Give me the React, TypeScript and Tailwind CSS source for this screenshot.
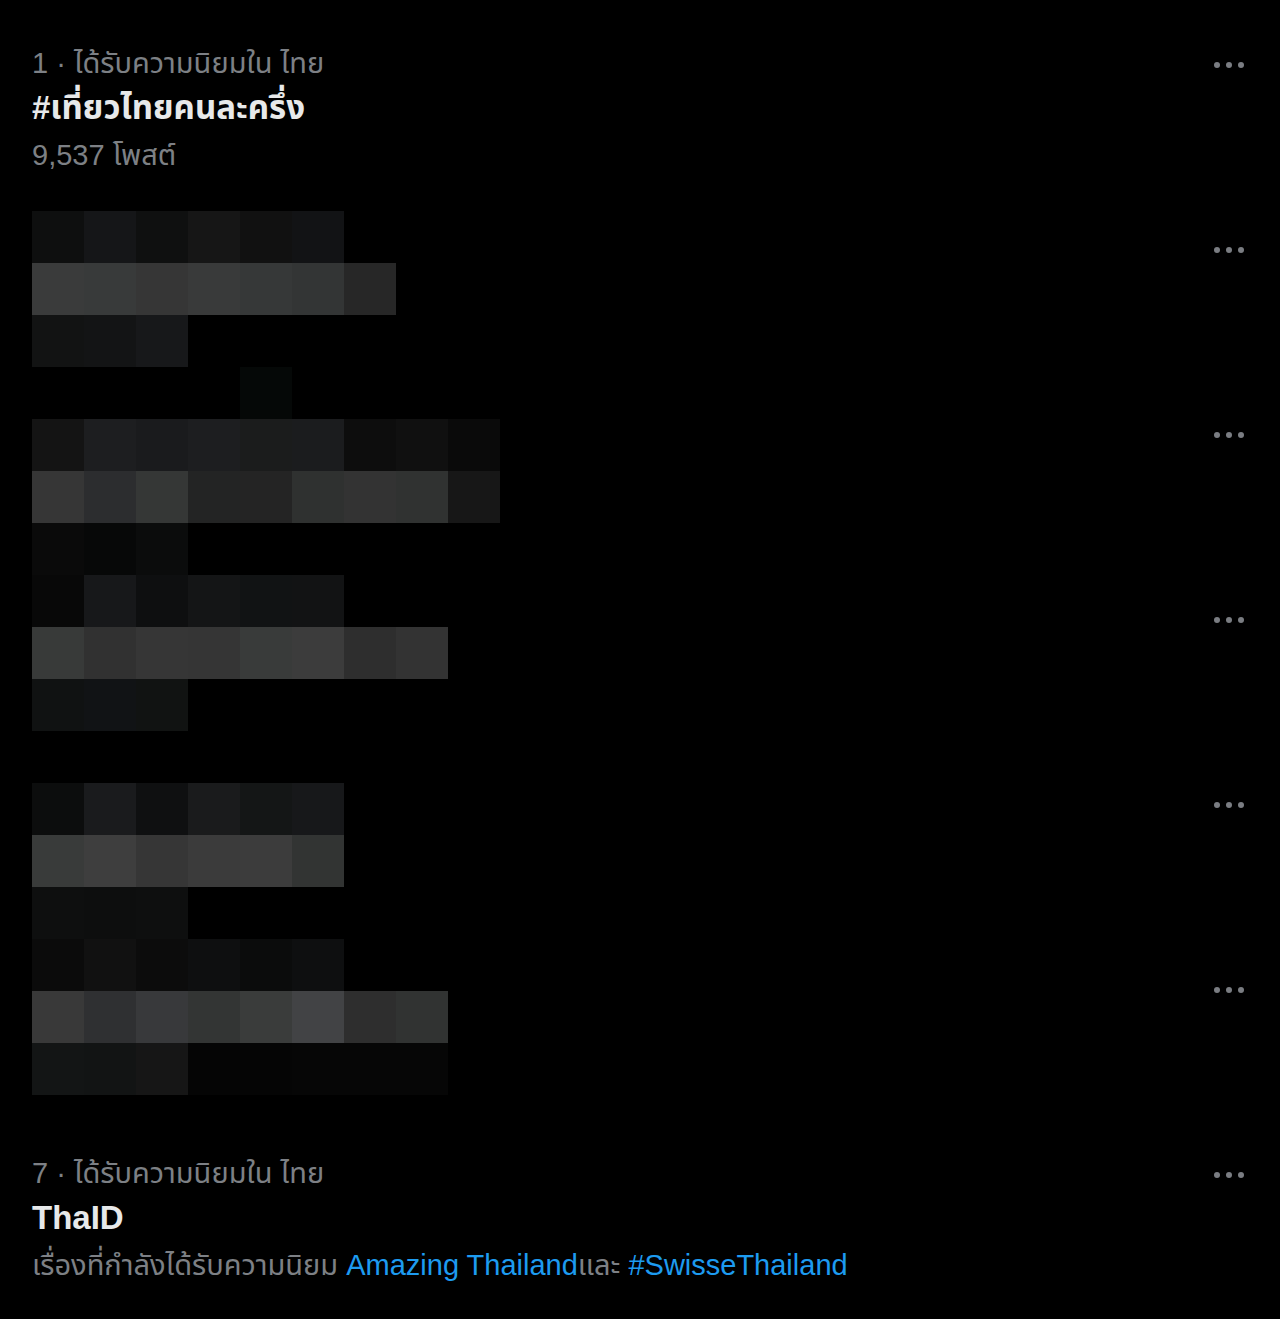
import React from 'react';

// censored area drawn as a mosaic, one entry per 52px cell
const mosaic: (string | null)[][] = [
  ['bg-[#0e0f0f]', 'bg-[#151618]', 'bg-[#0f1010]', 'bg-[#161616]', 'bg-[#111111]', 'bg-[#121315]'],
  ['bg-[#3a3b3b]', 'bg-[#383a3a]', 'bg-[#363636]', 'bg-[#393a3a]', 'bg-[#363838]', 'bg-[#333535]', 'bg-[#272727]'],
  ['bg-[#121313]', 'bg-[#131415]', 'bg-[#17181a]'],
  [null, null, null, null, 'bg-[#050807]'],
  ['bg-[#141414]', 'bg-[#1d1e20]', 'bg-[#1a1b1d]', 'bg-[#1d1e20]', 'bg-[#1b1c1c]', 'bg-[#1b1c1e]', 'bg-[#0d0d0d]', 'bg-[#101010]', 'bg-[#0a0a0a]'],
  ['bg-[#363636]', 'bg-[#2c2d2f]', 'bg-[#353736]', 'bg-[#232424]', 'bg-[#242424]', 'bg-[#2f3130]', 'bg-[#333333]', 'bg-[#303231]', 'bg-[#171717]'],
  ['bg-[#0a0a0a]', 'bg-[#070808]', 'bg-[#0b0c0c]'],
  ['bg-[#080808]', 'bg-[#17181a]', 'bg-[#0e0f10]', 'bg-[#141516]', 'bg-[#111314]', 'bg-[#121314]'],
  ['bg-[#383a39]', 'bg-[#313131]', 'bg-[#363636]', 'bg-[#353535]', 'bg-[#393b3a]', 'bg-[#3c3c3c]', 'bg-[#2e2e2e]', 'bg-[#333333]'],
  ['bg-[#101212]', 'bg-[#111315]', 'bg-[#111312]'],
  [],
  ['bg-[#0c0d0d]', 'bg-[#1a1b1d]', 'bg-[#0f1011]', 'bg-[#1a1b1c]', 'bg-[#141616]', 'bg-[#17181a]'],
  ['bg-[#393b3a]', 'bg-[#3e3e3e]', 'bg-[#363636]', 'bg-[#3b3b3b]', 'bg-[#3c3c3c]', 'bg-[#323433]'],
  ['bg-[#0e0f0f]', 'bg-[#0d0e0e]', 'bg-[#0e0f0f]'],
  ['bg-[#0b0b0b]', 'bg-[#111111]', 'bg-[#0c0c0c]', 'bg-[#0e0f10]', 'bg-[#0b0c0c]', 'bg-[#0e0f10]'],
  ['bg-[#393939]', 'bg-[#2f3032]', 'bg-[#38393b]', 'bg-[#333534]', 'bg-[#3a3c3b]', 'bg-[#424345]', 'bg-[#2e2e2e]', 'bg-[#313332]'],
  ['bg-[#131515]', 'bg-[#121414]', 'bg-[#161616]', 'bg-[#050505]', 'bg-[#050505]', 'bg-[#060606]', 'bg-[#060606]', 'bg-[#060606]'],
];

const font = { fontFamily: '"Liberation Sans", "Noto Sans Thai", "Noto Sans", sans-serif' };

const MoreButton: React.FC = () => (
  <div className="mt-[45px] h-[40px] flex items-center gap-[6px]">
    <span className="w-[6px] h-[6px] rounded-full bg-[#7a7d82]" />
    <span className="w-[6px] h-[6px] rounded-full bg-[#7a7d82]" />
    <span className="w-[6px] h-[6px] rounded-full bg-[#7a7d82]" />
  </div>
);

interface TrendProps {
  rank?: number;
  title?: string;
  children?: React.ReactNode;
}

const Trend: React.FC<TrendProps> = ({ rank, title, children }) => (
  <div className="h-[185px] flex justify-between pl-[32px] pr-[36px]">
    {rank ? (
      <div className="pt-[43px]">
        <div className="text-[29px] leading-[40px] text-[#7d8085]">{rank} · ได้รับความนิยมใน ไทย</div>
        <div className="text-[33px] leading-[50px] font-bold text-[#e7e9ea]">{title}</div>
        <div className="text-[29px] leading-[44px] text-[#7d8085] whitespace-nowrap">{children}</div>
      </div>
    ) : (
      <div />
    )}
    <MoreButton />
  </div>
);

export default function App() {
  return (
    <div className="w-[1280px] min-h-[1319px] bg-black" style={font}>
      <Trend rank={1} title="#เที่ยวไทยคนละครึ่ง">9,537 โพสต์</Trend>
      <div className="relative">
        <Trend />
        <Trend />
        <Trend />
        <Trend />
        <Trend />
        <div className="absolute left-[32px] top-[26px] grid grid-cols-[repeat(9,52px)] auto-rows-[52px]">
          {mosaic.map((row, r) =>
            Array.from({ length: 9 }, (_, c) => (
              <div key={`${r}-${c}`} className={row[c] ?? ''} />
            ))
          )}
        </div>
      </div>
      <Trend rank={7} title="ThaID">
        เรื่องที่กำลังได้รับความนิยม <span className="text-[#1d9bf0]">Amazing Thailand</span>และ{' '}
        <span className="text-[#1d9bf0]">#SwisseThailand</span>
      </Trend>
    </div>
  );
}
